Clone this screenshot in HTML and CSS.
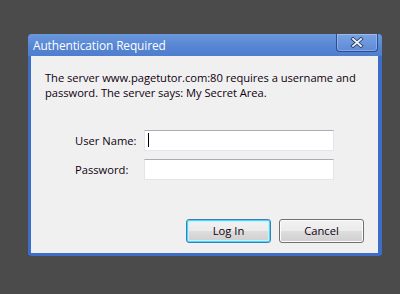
FILE: index.html
```html
<!DOCTYPE html>
<html>
<head>
<meta charset="utf-8">
<link rel="stylesheet" href="styles.css">
</head>
<body>
<div class="window">
  <div class="titlebar">
    <span class="title">Authentication Required</span>
    <div class="close">
      <svg width="14" height="11" viewBox="0 0 14 11">
        <path d="M3 2 L11 9 M11 2 L3 9" stroke="#2a3f6a" stroke-width="3.6" stroke-linecap="square"/>
        <path d="M3 2 L11 9 M11 2 L3 9" stroke="#eef3fb" stroke-width="1.8" stroke-linecap="square"/>
      </svg>
    </div>
  </div>
  <div class="content">
    <p class="msg">The server www.pagetutor.com:80 requires a username and password. The server says: My Secret Area.</p>
    <div class="form">
      <div class="row">
        <span class="label">User Name:</span>
        <div class="input"><span class="caret"></span></div>
      </div>
      <div class="row">
        <span class="label">Password:</span>
        <div class="input"></div>
      </div>
    </div>
    <div class="buttons">
      <div class="btn default">Log In</div>
      <div class="btn">Cancel</div>
    </div>
  </div>
</div>
</body>
</html>
```
FILE: styles.css
```css
html, body {
  margin: 0;
  padding: 0;
  background: #4b4b4b;
}
body {
  padding: 34px 0 0 28px;
  font-family: "Open Sans", "Noto Sans", sans-serif;
}
.window {
  width: 347px;
  border-left: 3px solid #3d6dc6;
  border-right: 4px solid #3d6dc6;
  border-bottom: 3px solid #3d6dc6;
  border-radius: 4px 4px 3px 3px;
  background: #3d6dc6;
  box-shadow: 0 1px 0 #3a3a3a;
}
.titlebar {
  height: 22px;
  margin: 0 -4px 0 -3px;
  padding: 0 4px 0 5px;
  display: flex;
  justify-content: space-between;
  align-items: flex-start;
  background: linear-gradient(#6b98dc, #5584d3 60%, #4f7ece);
  border-radius: 4px 4px 0 0;
}
.title {
  color: #ffffff;
  font-size: 11.9px;
  line-height: 22px;
  letter-spacing: -0.1px;
}
.close {
  width: 40px;
  height: 17px;
  border: 1px solid #2c4e91;
  border-top: none;
  border-radius: 0 0 4px 4px;
  background: linear-gradient(#7aa3e4, #5e8ad6);
  display: flex;
  align-items: center;
  justify-content: center;
  box-shadow: inset 0 0 0 1px rgba(255,255,255,0.25);
}
.content {
  background: #f0f0f0;
  height: 197px;
  padding: 0 14px;
  display: flex;
  flex-direction: column;
}
.msg {
  margin: 14px 0 0 0;
  font-size: 11.2px;
  line-height: 15px;
  color: #100010;
  letter-spacing: -0.05px;
}
.form {
  margin-top: 30px;
  padding-left: 30px;
  display: flex;
  flex-direction: column;
  gap: 8px;
}
.row {
  height: 21px;
  display: flex;
  align-items: center;
}
.label {
  width: 69px;
  font-size: 11.2px;
  color: #100010;
}
.input {
  width: 188px;
  height: 19px;
  background: #fff;
  border: 1px solid #e2e6ec;
  border-top-color: #abadb3;
  position: relative;
}
.caret {
  position: absolute;
  left: 3px;
  top: 2px;
  width: 1px;
  height: 14px;
  background: #000;
}
.buttons {
  margin-top: auto;
  margin-bottom: 10px;
  display: flex;
  justify-content: flex-end;
  gap: 8px;
}
.btn {
  width: 83px;
  height: 22px;
  border: 1px solid #707070;
  border-radius: 3px;
  background: linear-gradient(#f2f2f2, #ebebeb 50%, #dddddd 51%, #cfcfcf);
  box-shadow: inset 0 0 0 1px #fcfcfc;
  font-size: 11.2px;
  line-height: 22px;
  text-align: center;
  color: #100010;
}
.btn.default {
  border-color: #3c7fb1;
  box-shadow: inset 0 0 0 1px #48d8fb, inset 0 0 0 2px #c5f1fd;
}
```
